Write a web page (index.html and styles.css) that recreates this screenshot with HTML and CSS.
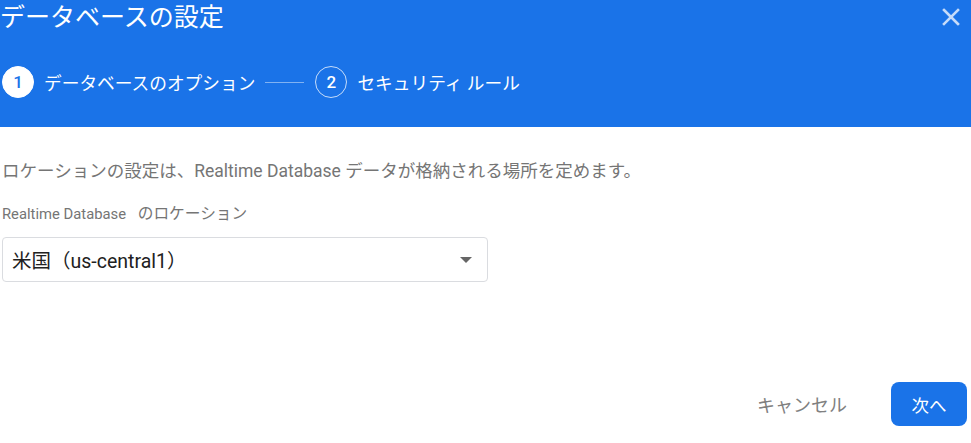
FILE: index.html
```html
<!DOCTYPE html>
<html lang="ja">
<head>
<meta charset="utf-8">
<link rel="stylesheet" href="styles.css">
</head>
<body>
<div class="dialog">
  <header class="header">
    <div class="title-row">
      <h1 class="title">データベースの設定</h1>
      <button class="close" aria-label="close">
        <svg width="18" height="18" viewBox="0 0 18 18"><path d="M2 2L16 16M16 2L2 16" stroke="#c6dbf9" stroke-width="2.6" stroke-linecap="square"/></svg>
      </button>
    </div>
    <div class="steps">
      <div class="step active"><span class="num">1</span><span class="label">データベースのオプション</span></div>
      <span class="connector"></span>
      <div class="step"><span class="num">2</span><span class="label">セキュリティ ルール</span></div>
    </div>
  </header>
  <main class="content">
    <p class="desc">ロケーションの設定は、Realtime Database データが格納される場所を定めます。</p>
    <div class="field-label">Realtime Database <span class="ja">のロケーション</span></div>
    <div class="select">
      <span class="value">米国（us-central1）</span>
      <svg class="arrow" width="12" height="6" viewBox="0 0 12 6"><path d="M0 0H12L6 6Z" fill="#666"/></svg>
    </div>
  </main>
  <footer class="actions">
    <button class="btn-text">キャンセル</button>
    <button class="btn-primary">次へ</button>
  </footer>
</div>
</body>
</html>
```
FILE: styles.css
```css
* { box-sizing: border-box; }
html, body { margin: 0; padding: 0; background: #fff; }
body {
  font-family: Roboto, "Noto Sans CJK JP", sans-serif;
  width: 971px;
  height: 443px;
  overflow: hidden;
  text-spacing-trim: space-all;
}
.dialog { display: flex; flex-direction: column; height: 443px; }
.header {
  background: #1a73e8;
  height: 127px;
  color: #fff;
}
.title-row {
  display: flex;
  justify-content: space-between;
  align-items: flex-start;
}
.title {
  margin: 0;
  font-size: 25px;
  font-weight: 400;
  line-height: 36px;
  letter-spacing: 0;
}
.close {
  background: none;
  border: 0;
  padding: 0;
  margin: 8px 11px 0 0;
  width: 18px;
  height: 18px;
  display: block;
}
.close svg { display: block; }
.steps {
  display: flex;
  align-items: center;
  padding: 30px 0 0 2px;
}
.step { display: flex; align-items: center; }
.num {
  width: 32px;
  height: 32px;
  border-radius: 50%;
  border: 1px solid rgba(255,255,255,0.75);
  display: flex;
  align-items: center;
  justify-content: center;
  font-size: 17px;
  font-weight: 500;
  color: #fff;
}
.step.active .num { background: #fff; color: #1a73e8; border-color: #fff; }
.label {
  margin-left: 10px;
  font-size: 17.7px;
  color: #fff;
}
.connector {
  width: 39px;
  height: 1px;
  background: rgba(255,255,255,0.45);
  margin: 0 11px 0 10px;
}
.content { padding: 0 0 0 2px; flex: 1; }
.desc {
  margin: 32px 0 0 0;
  font-size: 17.5px;
  line-height: 24px;
  color: #757575;
}
.field-label {
  margin-top: 21px;
  font-size: 14.8px;
  line-height: 20px;
  color: #757575;
}
.field-label .ja { font-size: 15.7px; margin-left: 8px; }
.select {
  margin-top: 13px;
  width: 486px;
  height: 45px;
  border: 1px solid #dadce0;
  border-radius: 4px;
  display: flex;
  align-items: center;
  justify-content: space-between;
  padding: 0 15px 0 9px;
}
.value { font-size: 19.5px; color: #212121; }
.arrow { display: block; }
.actions {
  display: flex;
  justify-content: flex-end;
  align-items: center;
  padding: 0 4px 17px 0;
  gap: 44px;
}
.btn-text {
  background: none;
  border: 0;
  font-family: inherit;
  font-size: 18px;
  color: #808080;
  padding: 0;
}
.btn-primary {
  background: #1a73e8;
  color: #fff;
  border: 0;
  border-radius: 8px;
  width: 76px;
  height: 44px;
  font-family: inherit;
  font-size: 17.5px;
  padding: 0;
}
```
